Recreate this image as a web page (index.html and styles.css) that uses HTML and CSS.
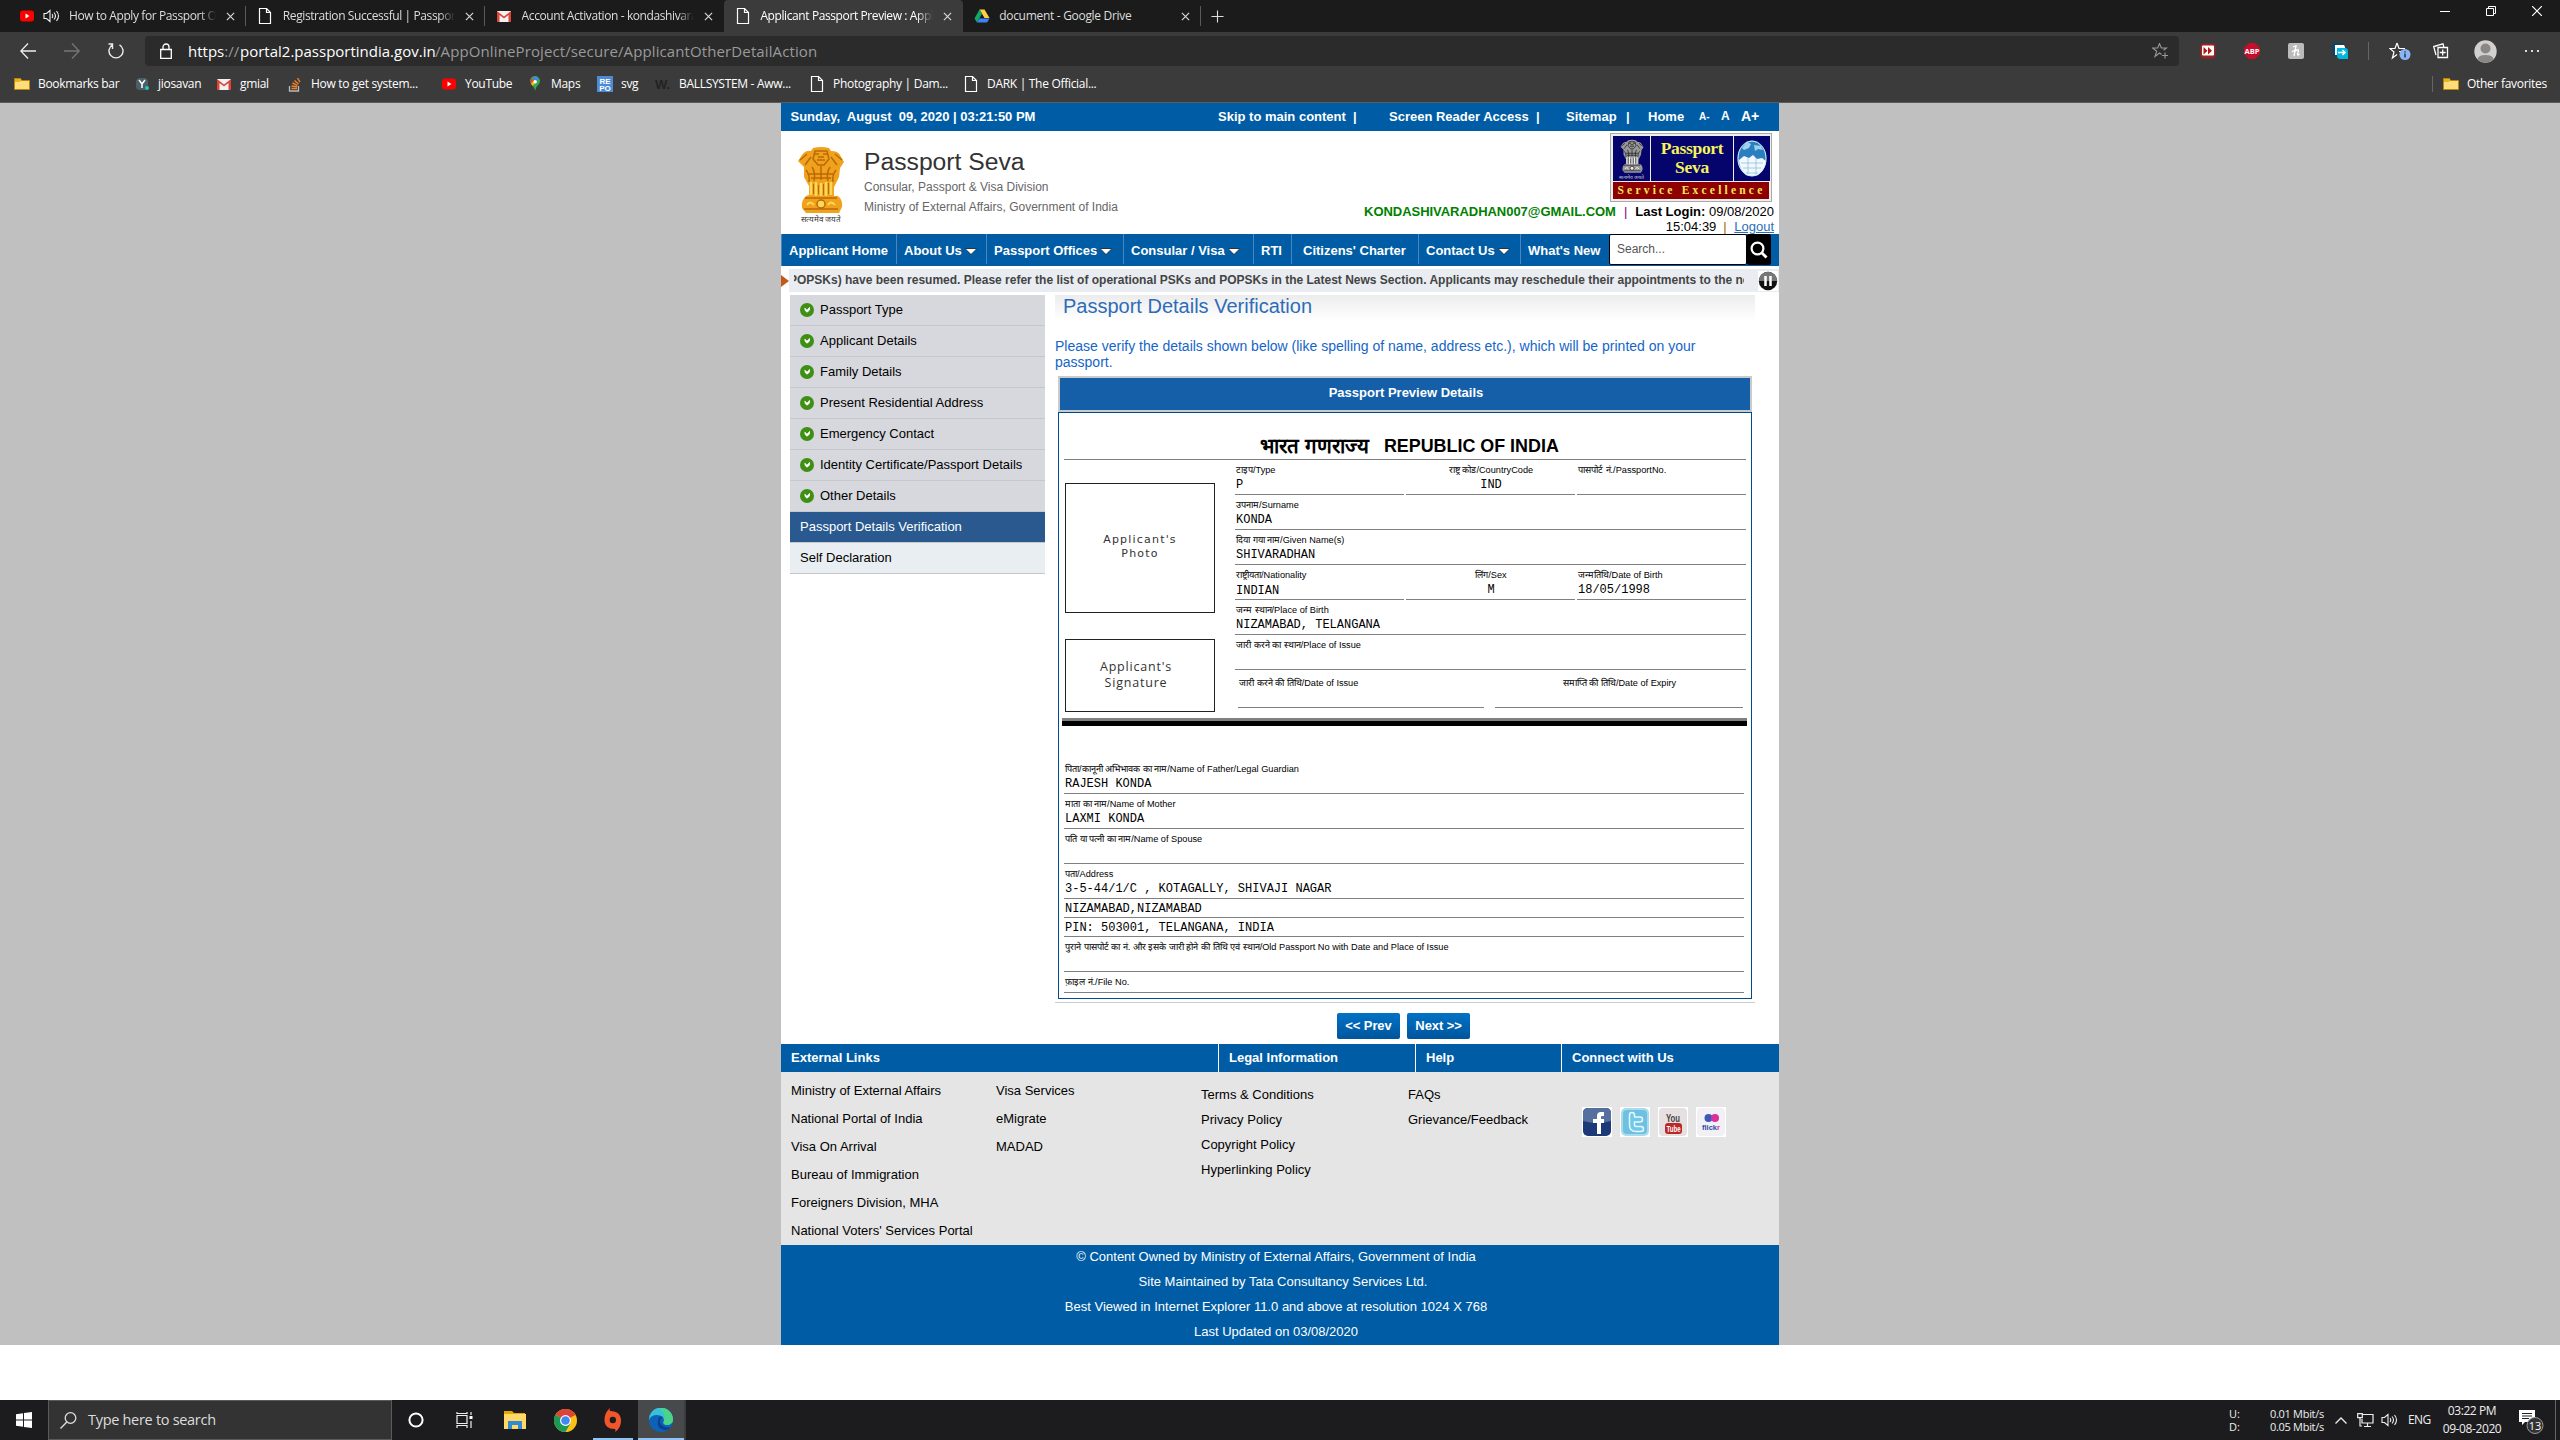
FILE: index.html
```html
<!DOCTYPE html>
<html lang="en">
<head>
<meta charset="utf-8">
<title>Applicant Passport Preview</title>
<link rel="stylesheet" href="styles.css">
</head>
<body>
<svg class="defs" width="0" height="0" aria-hidden="true">
  <defs>
    <symbol id="doc" viewBox="0 0 16 16"><path d="M2.5.5h7l4 4v11h-11zM9.5.5v4h4" fill="none" stroke="#fff" stroke-width="1.2"/></symbol>
    <symbol id="x" viewBox="0 0 10 10"><path d="M1 1l8 8M9 1L1 9" stroke="#d8d8d8" stroke-width="1.3" fill="none"/></symbol>
    <symbol id="yt" viewBox="0 0 16 16"><rect x="1" y="2.500" width="14" height="11" rx="3" fill="#f00"/><path d="M6.500 5.500v5l4-2.500z" fill="#fff"/></symbol>
    <symbol id="gmail" viewBox="0 0 16 16"><path d="M1 3h14v11H1z" fill="#f2f2f2"/><path d="M1 14V3l7 5.500L15 3v11h-2.500V7L8 10.500 3.500 7v7z" fill="#db4437"/></symbol>
    <symbol id="folder" viewBox="0 0 16 16"><path d="M.5 2.500h6l1 2h8v9H.5z" fill="#ffdc7c" stroke="#b8860b"/><path d="M1 3h5l1 1.500L6 6H1z" fill="#e6b422"/></symbol>
    <symbol id="vol" viewBox="0 0 17 16"><path d="M1 5.500h2.500L7 2.500v11L3.500 10.500H1zM9 6q1.500 2 0 4M11 4.500q3 3.500 0 7M13.500 3q4 5 0 10" fill="none" stroke="#eee" stroke-width="1.100"/></symbol>
    <symbol id="tick" viewBox="0 0 14 14"><circle cx="7" cy="7" r="7" fill="#3f8f14"/><path d="M4.800 5.200l2.200 2 2.600-2.800-.2 2.800L7 9.200 5.200 7.500z" fill="#fff" stroke="#fff" stroke-width=".8"/></symbol>
    <symbol id="emblem" viewBox="0 0 48 67">
      <path d="M16 1q8-2 16 0l2 3q7 0 9 4l4 7-4 6-1 9-5 10v9h4q5 4 4 11l-3 6H9l-4-5q-1-8 4-12l3-1v-9L7 30V20l-6-6 4-6q4-5 9-4z" fill="var(--a)"/>
      <path d="M18 4h12l2 8-5 6h-6l-5-6zM3 13l7-6M8 18l6-8M45 13l-7-6M40 18l-6-8M9 23q4 5 3 12M15 20q4 6 2 14M24 19v14M33 20q-4 6-2 14M39 23q-4 5-3 12M12 27h24M14 31h20" fill="none" stroke="var(--b)" stroke-width="1.500"/>
      <path d="M18 7h4M26 7h4M20 13h8M21 10h6" stroke="var(--b)" stroke-width="1.600"/>
      <path d="M14 35v13M19 35v14M24 36v13M29 35v14M34 35v13" stroke="var(--c)" stroke-width="2.400"/>
      <path d="M16.500 37v10M26.500 37v11M31.500 36v11M21.500 38v9" stroke="var(--b)" stroke-width="1"/>
      <path d="M8 51h32M7 62h34" stroke="var(--b)" stroke-width="1.300"/>
      <circle cx="24" cy="57" r="4" fill="var(--c)" stroke="var(--b)" stroke-width="1.500"/>
      <path d="M10 58q3-5 7 0M31 58q3-5 7 0" fill="none" stroke="var(--c)" stroke-width="2"/>
    </symbol>
  </defs>
</svg>

<header class="browser">
  <div class="tabs">
    <div class="tab"><svg class="i16"><use href="#yt"/></svg><svg class="sound"><use href="#vol"/></svg><span class="name fade">How to Apply for Passport Online</span><svg class="close"><use href="#x"/></svg></div>
    <div class="tab"><svg class="i16"><use href="#doc"/></svg><span class="name fade">Registration Successful | Passport</span><svg class="close"><use href="#x"/></svg></div>
    <div class="tab plain"><svg class="i16"><use href="#gmail"/></svg><span class="name fade">Account Activation - kondashivara</span><svg class="close"><use href="#x"/></svg></div>
    <div class="tab active"><svg class="i16"><use href="#doc"/></svg><span class="name fade">Applicant Passport Preview : Appl</span><svg class="close"><use href="#x"/></svg></div>
    <div class="tab"><svg class="i16" viewBox="0 0 16 16"><path d="M5.500 1.500h5l5 8.500h-5z" fill="#ffcf40"/><path d="M5.500 1.500L.5 10.500 3 14.500l5-8.700z" fill="#11a861"/><path d="M5.500 10.500h10l-2.500 4H3z" fill="#3d82f6"/></svg><span class="name">document - Google Drive</span><svg class="close"><use href="#x"/></svg></div>
    <svg class="plus" viewBox="0 0 14 14"><path d="M7 .5v13M.5 7h13" stroke="#ddd" stroke-width="1.200"/></svg>
    <div class="window-buttons">
      <svg width="10" height="10"><path d="M0 5.500h10" stroke="#fff"/></svg>
      <svg width="10" height="10"><path d="M.5 2.500h7v7h-7zM2.500 2.500v-2h7v7h-2" fill="none" stroke="#fff"/></svg>
      <svg width="10" height="10"><path d="M0 0l10 10M10 0L0 10" stroke="#fff" stroke-width="1.200"/></svg>
    </div>
  </div>
  <div class="toolbar">
    <div class="nav-buttons">
      <svg width="16" height="16"><path d="M16 8H1M8 .5L.8 8 8 15.500" fill="none" stroke="#eee" stroke-width="1.300"/></svg>
      <svg width="16" height="16"><path d="M0 8h15M8 .5L15.200 8 8 15.500" fill="none" stroke="#777" stroke-width="1.300"/></svg>
      <svg width="16" height="18"><path d="M4.500 2.800a7 7 0 1 0 7 0M4.500 7V2H.5" fill="none" stroke="#eee" stroke-width="1.400"/></svg>
    </div>
    <div class="omnibox">
      <svg width="12" height="16"><path d="M.7 6.500h10.600v8.800H.7zM3 6.500V4a3 3 0 0 1 6 0v2.500" fill="none" stroke="#fff" stroke-width="1.300"/></svg>
      <span class="url"><b class="proto">https<i>://</i></b><b class="host">portal2.passportindia.gov.in</b><i class="path">/AppOnlineProject/secure/ApplicantOtherDetailAction</i></span>
      <svg class="fav" width="16" height="16" viewBox="0 0 16 16"><path d="M9.500 11.500L7.500 10l-4.500 3.500 1.700-5.300L.5 5h5.200L7.500.5 9.300 5h5.200l-3 2.300M13 9.500v6M10 12.500h6" fill="none" stroke="#999" stroke-width="1.100"/></svg>
    </div>
    <div class="extensions">
      <svg width="16" height="16"><rect width="15" height="15" x=".5" y=".5" rx="4" fill="#a32020"/><rect x="2" y="2.500" width="12" height="10" rx="1" fill="#fff"/><path d="M3.500 4v7.500l4-3.700zM8 4v7.500l4-3.700z" fill="#b01818"/></svg>
      <svg width="16" height="16"><path d="M5 0h6l5 5v6l-5 5H5l-5-5V5z" fill="#c70d2c"/><text x="8" y="10.600" class="abp" text-anchor="middle">ABP</text></svg>
      <svg width="16" height="16"><rect width="16" height="16" rx="2" fill="#bbb"/><path d="M5 4q4-2 3-1L6 13M6.500 9q4-4 4-1l-1 3q0 2 2 0M4 9l3-2" fill="none" stroke="#fff" stroke-width="1.300"/></svg>
      <svg width="16" height="16"><path d="M0 0h10l2 4H5v9H1z" fill="#05466f"/><path d="M3 2h9l1 2v8H3z" fill="#fff"/><path d="M5 5h8q3 0 3 3v8H8q-3 0-3-3z" fill="#00b7e0"/><path d="M6 9.500h7M10.500 7l2.500 2.500-2.500 2.500" stroke="#fff" stroke-width="1.600" fill="none"/></svg>
    </div>
    <div class="actions">
      <svg width="22" height="18"><path d="M8 1l2 5.500h6M8 1L6 6.500H.8L5 10l-1.600 6L8 12.500M10 9.500h6" fill="none" stroke="#fff" stroke-width="1.200"/><circle cx="16" cy="12.500" r="5.500" fill="#8ab4f8"/><path d="M16 11.500v4M16 9.300v1.300" stroke="#222" stroke-width="1.300"/></svg>
      <svg class="collections" width="16" height="16"><path d="M5 4.500h9.500v10H5zM9.700 6.500v6M6.700 9.500h6M3 12L.7 3.500 10 .8l.8 3M5 2.300l-3 1" fill="none" stroke="#fff" stroke-width="1.300"/></svg>
      <svg class="avatar" width="23" height="23"><circle cx="11.500" cy="11.500" r="11.200" fill="#d2d0ce"/><circle cx="11.500" cy="8.500" r="5" fill="#8a8886"/><path d="M3.500 19q1-4 8-4t8 4q-3 3.700-8 3.700T3.500 19" fill="#8a8886"/></svg>
      <svg width="14" height="4"><path d="M0 1h2v2H0zM6 1h2v2H6zM12 1h2v2h-2z" fill="#ddd"/></svg>
    </div>
  </div>
  <div class="bookmarks">
    <span><svg class="i16"><use href="#folder"/></svg><b>Bookmarks bar</b></span>
    <span><svg class="i16"><rect x="2" y="2" width="12" height="12" rx="4" fill="#4a5f68"/><path d="M5 4l3 4 3-4M8 8v4" stroke="#fff" stroke-width="1.500" fill="none"/><circle cx="13" cy="12" r="2" fill="#2bc5b4"/></svg><b>jiosavan</b></span>
    <span><svg class="i16"><use href="#gmail"/></svg><b>gmial</b></span>
    <span><svg class="i16"><path d="M2.500 10v5h9v-5" fill="none" stroke="#bcbbbb" stroke-width="1.300"/><path d="M4.500 12.500h5.500M4.500 10l5.600.8M5.500 7l5 2.300M7.500 4.500l4 3.500M10.500 2l2.500 4.200" stroke="#f48024" stroke-width="1.400"/></svg><b>How to get system...</b></span>
    <span><svg class="i16"><use href="#yt"/></svg><b>YouTube</b></span>
    <span><svg class="i16"><path d="M8 15q0-3-3.500-6.500A5 5 0 1 1 12 8Q8.500 11 8 15" fill="#34a853"/><path d="M4 7.500A5 5 0 0 1 5 2l3 3z" fill="#ea4335"/><path d="M5 2a5 5 0 0 1 7 1L8 5z" fill="#4285f4"/><path d="M4 7.500l3-3 2 2-3.500 3.500z" fill="#fbbc04"/><circle cx="8.200" cy="5.800" r="1.700" fill="#fff"/></svg><b>Maps</b></span>
    <span><svg class="i16"><rect width="16" height="16" fill="#4d8bd6"/><text class="repo" x="8" y="7.500" text-anchor="middle">RE</text><text class="repo" x="8" y="15" text-anchor="middle">PO</text></svg><b>svg</b></span>
    <span><svg class="i16"><text class="w" x="0" y="13">W.</text></svg><b>BALLSYSTEM - Aww...</b></span>
    <span><svg class="i16"><use href="#doc"/></svg><b>Photography | Dam...</b></span>
    <span><svg class="i16"><use href="#doc"/></svg><b>DARK | The Official...</b></span>
    <span class="other"><svg class="i16"><use href="#folder"/></svg><b>Other favorites</b></span>
  </div>
</header>

<main class="backdrop">
<div class="page">
  <div class="top-bar">
    <span class="date">Sunday,&nbsp; August&nbsp; 09, 2020 | 03:21:50 PM</span>
    <span>Skip to main content&nbsp; |</span><span>Screen Reader Access&nbsp; |</span><span>Sitemap</span><span>|</span><span>Home</span><span class="a-small">A-</span><span class="a-mid">A</span><span class="a-big">A+</span>
  </div>
  <div class="masthead">
    <div class="brand">
      <div class="emblem"><svg width="48" height="69"><use href="#emblem"/></svg><small>सत्यमेव जयते</small></div>
      <div><h1>Passport Seva</h1><p>Consular, Passport &amp; Visa Division</p><p>Ministry of External Affairs, Government of India</p></div>
    </div>
    <div class="account">
      <div class="badge">
        <div class="badge-top">
          <div class="mini"><svg width="24" height="35"><use href="#emblem"/></svg><small>सत्यमेव जयते</small></div>
          <div class="seva">Passport<br>Seva</div>
          <div class="globe"><svg width="30" height="37" viewBox="0 0 30 37"><ellipse cx="15" cy="18.500" rx="14.500" ry="18" fill="#2a7fc0"/><path d="M7 16l5 2 4-3 4 4 5-1 4 3q-1 9-8 14-6 2-12 0Q2 29 2 20z" fill="#f2f8fc"/><path d="M10 2l4 2-2 4-5 2-2-2zM17 5l7 1 2 4-5-1-3 2z" fill="#9fd0ee"/><path d="M4 23h22M6 28h18M9 33h12M11 18v16M19 18v17" stroke="#8fc0e4" stroke-width=".8"/><ellipse cx="15" cy="18.500" rx="14" ry="17.500" fill="none" stroke="#dceefa"/></svg></div>
        </div>
        <div class="excellence">Service Excellence</div>
      </div>
      <div class="login"><b class="mail">KONDASHIVARADHAN007@GMAIL.COM</b><i>|</i><b>Last Login:</b> 09/08/2020</div>
      <div class="login second">15:04:39<i class="brown">|</i><u>Logout</u></div>
    </div>
  </div>
  <nav class="menu">
    <a>Applicant Home</a><a>About Us<svg class="caret"><path d="M0 0h12L6 7z" fill="#333"/><path d="M1 1h10L6 6z" fill="#fff"/></svg></a><a>Passport Offices<svg class="caret"><path d="M0 0h12L6 7z" fill="#333"/><path d="M1 1h10L6 6z" fill="#fff"/></svg></a><a>Consular / Visa<svg class="caret"><path d="M0 0h12L6 7z" fill="#333"/><path d="M1 1h10L6 6z" fill="#fff"/></svg></a><a>RTI</a><a class="charter">Citizens' Charter</a><a>Contact Us<svg class="caret"><path d="M0 0h12L6 7z" fill="#333"/><path d="M1 1h10L6 6z" fill="#fff"/></svg></a><a class="last">What's New</a>
    <div class="search"><span>Search...</span></div>
    <div class="go"><svg width="18" height="18"><circle cx="7.500" cy="7.500" r="5.900" fill="none" stroke="#fff" stroke-width="2.200"/><path d="M11.500 11.500l5 5" stroke="#fff" stroke-width="2.800"/></svg></div>
  </nav>
  <div class="ticker">
    <svg width="8" height="12"><path d="M0 0l8 6-8 6z" fill="#c05a1c"/></svg>
    <div class="strip"><div class="news"><span>POPSKs) have been resumed. Please refer the list of operational PSKs and POPSKs in the Latest News Section. Applicants may reschedule their appointments to the nearest</span></div>
    <svg class="pause" width="20" height="20"><rect width="20" height="20" fill="#fff"/><circle cx="10" cy="10" r="9.200" fill="#111"/><path d="M.8 10a9.200 9.200 0 0 1 18.400 0z" fill="#777"/><path d="M7.500 5v10M12.500 5v10" stroke="#fff" stroke-width="2.500"/></svg></div>
  </div>

  <div class="content">
    <ul class="steps">
      <li><svg class="tick"><use href="#tick"/></svg>Passport Type</li>
      <li><svg class="tick"><use href="#tick"/></svg>Applicant Details</li>
      <li><svg class="tick"><use href="#tick"/></svg>Family Details</li>
      <li><svg class="tick"><use href="#tick"/></svg>Present Residential Address</li>
      <li><svg class="tick"><use href="#tick"/></svg>Emergency Contact</li>
      <li><svg class="tick"><use href="#tick"/></svg>Identity Certificate/Passport Details</li>
      <li><svg class="tick"><use href="#tick"/></svg>Other Details</li>
      <li class="current">Passport Details Verification</li>
      <li class="next">Self Declaration</li>
    </ul>
    <section class="verify">
      <h2>Passport Details Verification</h2>
      <p class="hint">Please verify the details shown below (like spelling of name, address etc.), which will be printed on your passport.</p>
      <div class="preview-head">Passport Preview Details</div>
      <div class="preview">
        <h3><span>भारत गणराज्य</span> REPUBLIC OF INDIA</h3>
        <div class="identity">
          <div class="pictures"><div class="photo">Applicant's<br>Photo</div><div class="signature">Applicant's<br>Signature</div></div>
          <div class="fields">
            <div class="trio">
              <div class="field"><label>टाइप/Type</label><span>P</span></div>
              <div class="field mid"><label>राष्ट्र कोड/CountryCode</label><span>IND</span></div>
              <div class="field"><label>पासपोर्ट नं./PassportNo.</label></div>
            </div>
            <div class="field"><label>उपनाम/Surname</label><span>KONDA</span></div>
            <div class="field"><label>दिया गया नाम/Given Name(s)</label><span>SHIVARADHAN</span></div>
            <div class="trio">
              <div class="field"><label>राष्ट्रीयता/Nationality</label><span class="low">INDIAN</span></div>
              <div class="field mid"><label>लिंग/Sex</label><span>M</span></div>
              <div class="field"><label>जन्मतिथि/Date of Birth</label><span>18/05/1998</span></div>
            </div>
            <div class="field"><label>जन्म स्थान/Place of Birth</label><span>NIZAMABAD, TELANGANA</span></div>
            <div class="field"><label>जारी करने का स्थान/Place of Issue</label></div>
            <div class="dates">
              <div class="field"><label>जारी करने की तिथि/Date of Issue</label></div>
              <div class="field mid"><label>समाप्ति की तिथि/Date of Expiry</label></div>
            </div>
          </div>
        </div>
        <div class="divider"></div>
        <div class="back-page">
          <div class="field"><label>पिता/कानूनी अभिभावक का नाम/Name of Father/Legal Guardian</label><span>RAJESH KONDA</span></div>
          <div class="field"><label>माता का नाम/Name of Mother</label><span>LAXMI KONDA</span></div>
          <div class="field"><label>पति या पत्नी का नाम/Name of Spouse</label></div>
          <div class="field"><label>पता/Address</label><span>3-5-44/1/C , KOTAGALLY, SHIVAJI NAGAR</span></div>
          <div class="field line"><span>NIZAMABAD,NIZAMABAD</span></div>
          <div class="field line"><span>PIN: 503001, TELANGANA, INDIA</span></div>
          <div class="field"><label>पुराने पासपोर्ट का नं. और इसके जारी होने की तिथि एवं स्थान/Old Passport No with Date and Place of Issue</label></div>
          <div class="field file"><label>फ़ाइल नं./File No.</label></div>
        </div>
      </div>
      <div class="buttons"><button>&lt;&lt; Prev</button><button>Next &gt;&gt;</button></div>
    </section>
  </div>

  <div class="foot-head"><span>External Links</span><span>Legal Information</span><span>Help</span><span>Connect with Us</span></div>
  <div class="foot">
    <ul class="ext"><li>Ministry of External Affairs</li><li>National Portal of India</li><li>Visa On Arrival</li><li>Bureau of Immigration</li><li>Foreigners Division, MHA</li><li>National Voters' Services Portal</li></ul>
    <ul class="ext"><li>Visa Services</li><li>eMigrate</li><li>MADAD</li></ul>
    <ul class="legal"><li>Terms &amp; Conditions</li><li>Privacy Policy</li><li>Copyright Policy</li><li>Hyperlinking Policy</li></ul>
    <ul class="legal"><li>FAQs</li><li>Grievance/Feedback</li></ul>
    <div class="social">
      <svg width="30" height="30"><rect width="30" height="30" fill="#fff"/><rect x="1" y="1" width="28" height="28" rx="5" fill="#1d3a78"/><path d="M1 14V6q0-5 5-5h18q5 0 5 5v8q-14 4-28 0" fill="#55709f"/><path d="M15 27V16h-4v-4h4V9q0-4 4-4h3v4h-2q-1 0-1 1v2h3v4h-3v11z" fill="#fff"/></svg>
      <svg width="30" height="30"><rect width="30" height="30" fill="#fff"/><rect x="1" y="1" width="28" height="28" rx="5" fill="#a9dbec"/><rect x="3" y="3" width="24" height="24" rx="4" fill="#6fc1e2"/><path d="M12 8v10q0 4 4 4h5M12 12.500h8" fill="none" stroke="#e8f7fc" stroke-width="6.500" stroke-linecap="round"/><path d="M12 8v10q0 4 4 4h5M12 12.500h8" fill="none" stroke="#6fc9e8" stroke-width="3.500" stroke-linecap="round"/></svg>
      <svg width="30" height="30"><rect width="30" height="30" fill="#fff"/><rect x="1" y="1" width="28" height="28" rx="4" fill="#e6e0e0"/><text class="you" x="15" y="14.500" text-anchor="middle" textLength="14" lengthAdjust="spacingAndGlyphs">You</text><rect x="7" y="16" width="17" height="11" rx="3" fill="#bb2626"/><text class="tube" x="15.500" y="25" text-anchor="middle" textLength="14" lengthAdjust="spacingAndGlyphs">Tube</text></svg>
      <svg width="30" height="30"><rect width="30" height="30" fill="#fff"/><rect x="1" y="1" width="28" height="28" rx="4" fill="#f2f0f4"/><circle cx="12.500" cy="11" r="4" fill="#3a59b8"/><circle cx="19" cy="11" r="4" fill="#d8319a"/><text class="flickr" x="15" y="22.500" text-anchor="middle" textLength="18" lengthAdjust="spacingAndGlyphs">flick<tspan fill="#d8319a">r</tspan></text></svg>
    </div>
  </div>
  <div class="copyright"><p>© Content Owned by Ministry of External Affairs, Government of India</p><p class="site">Site Maintained by Tata Consultancy Services Ltd.</p><p>Best Viewed in Internet Explorer 11.0 and above at resolution 1024 X 768</p><p>Last Updated on 03/08/2020</p></div>
</div>
</main>

<footer class="taskbar">
  <div class="start"><svg width="16" height="16"><path d="M0 2.300l7-1v6.200H0zM8 1.100L16 0v7.500H8zM0 8.500h7v6.200l-7-1zM8 8.500h8V16l-8-1.100z" fill="#fff"/></svg></div>
  <div class="find"><svg width="17" height="17"><circle cx="10.500" cy="6" r="5.300" fill="none" stroke="#ddd" stroke-width="1.300"/><path d="M6.800 10L.5 16.500" stroke="#ddd" stroke-width="1.400"/></svg><span>Type here to search</span></div>
  <div class="apps">
    <div><svg width="16" height="16"><circle cx="8" cy="8" r="6.600" fill="none" stroke="#fff" stroke-width="2"/></svg></div>
    <div><svg width="17" height="16"><path d="M1 3.500h10v8H1zM1 0v1.500h10V0M1 16v-2.500h10V16M15 0v3M15 9v7" fill="none" stroke="#eee" stroke-width="1.200"/><path d="M13.500 4h3v3h-3z" fill="#fff"/></svg></div>
    <div><svg width="22" height="20"><path d="M0 1h8l2 2h11v15H0z" fill="#e0a800"/><path d="M0 4h22v15H0z" fill="#ffd867"/><path d="M4 19v-8h14v8h-4v-4H8v4z" fill="#2e8bd6"/></svg></div>
    <div><svg width="23" height="23" viewBox="0 0 24 24"><circle cx="12" cy="12" r="12" fill="#fbc116"/><path d="M12 12L1.600 6A12 12 0 0 1 22.400 6z" fill="#dc4437"/><path d="M12 12L1.600 6A12 12 0 0 0 12 24l5-9z" fill="#1a9a55"/><path d="M12 6.500h10.600L22 5.500 12 5z" fill="#dc4437"/><circle cx="12" cy="12" r="5.700" fill="#fff"/><circle cx="12" cy="12" r="4.500" fill="#4486f4"/></svg></div>
    <div class="open"><svg width="20" height="24"><path d="M7 0q-1 2 0 3 11 0 11 10 0 7-6 11 1-2 0-3Q1 21 1.500 11 2 4 7 0" fill="#f0562a"/><circle cx="9.800" cy="12" r="3.200" fill="#1c1c1e"/></svg></div>
    <div class="running"><svg width="24" height="24"><circle cx="12" cy="12" r="12" fill="#0b62b8"/><path d="M0 12A12 12 0 0 1 24 11q0 6-7 6-4-1-2-4 0-6-7-6-6 0-8 5" fill="#37c0d8"/><path d="M10 .2A12 12 0 0 1 24 11q0 6-7 6-4-1-2-4 2-8-5-12.800" fill="#4bd38a"/><path d="M9 12q-2 9 7 10 4 0 6-3-3 1-6 0-5-2-5-6 0-3 3-4-4-1-5 3" fill="#0e3f8c"/></svg></div>
  </div>
  <div class="tray">
    <div class="net"><span>U:</span><em>0.01 Mbit/s</em><span>D:</span><em>0.05 Mbit/s</em></div>
    <svg class="up" width="12" height="7"><path d="M.5 6.500L6 1l5.500 5.500" fill="none" stroke="#eee" stroke-width="1.300"/></svg>
    <svg class="screen" width="17" height="15"><path d="M5 1.500h11v8.500H5V6M10.500 10v3.500M7 13.500h7M.7.700h4.600v4H.7zM3 4.700V13h2" fill="none" stroke="#eee" stroke-width="1.200"/></svg>
    <svg class="volume" width="17" height="16"><use href="#vol"/></svg>
    <span class="lang">ENG</span>
    <div class="clock">03:22 PM<br>09-08-2020</div>
    <svg class="notes" width="26" height="26"><path d="M0 1h16v12H6l-3 3v-3H0z" fill="#fff"/><path d="M3 4.500h10M3 7h10M3 9.500h7" stroke="#222" stroke-width="1.200"/><circle cx="16" cy="16.500" r="8" fill="#333" stroke="#999"/><text x="16" y="20.500" class="count" text-anchor="middle">13</text></svg>
  </div>
</footer>
</body>
</html>
```
FILE: styles.css
```css
* { box-sizing: border-box; }
body { margin: 0; width: 2560px; height: 1440px; overflow: hidden; display: flex; flex-direction: column; background: #fff; font: 13px/16px "Liberation Sans", Arial, sans-serif; color: #000; }
svg { display: block; flex: none; }
.defs { position: absolute; }
ul, p, h1, h2, h3 { margin: 0; padding: 0; list-style: none; font-weight: normal; }
.i16 { width: 16px; height: 16px; }

/* Browser frame */
.browser { height: 103px; flex: none; background: #3b3b3b; border-bottom: 1px solid #5c5c5c; font-family: "Open Sans", "Noto Sans", sans-serif; color: #fff; }
.tabs { height: 32px; background: #1b1b1b; display: flex; align-items: center; padding-left: 7.500px; font-size: 12px; }
.tab { width: 238.800px; height: 32px; flex: none; padding: 0 11px; display: flex; align-items: center; position: relative; color: #ddd; }
.tab::after { content: ""; width: 1px; height: 20px; background: #5a5a5a; position: absolute; right: 0; top: 6px; }
.tab.plain::after, .tab.active::after { display: none; }
.tab.active { background: #3b3b3b; color: #fff; border-radius: 4px 4px 0 0; }
.tab .sound { width: 17px; height: 16px; margin-left: 8px; }
.tab .name { flex: 1; margin: 0 10px 0 9.500px; white-space: nowrap; overflow: hidden; letter-spacing: -.3px; }
.fade { -webkit-mask-image: linear-gradient(90deg, #000 calc(100% - 16px), transparent); mask-image: linear-gradient(90deg, #000 calc(100% - 16px), transparent); }
.tab .fade { letter-spacing: -.4px; }
.close { width: 9px; height: 9px; }
.plus { width: 13px; height: 13px; margin-left: 10px; }
.window-buttons { margin-left: auto; padding: 0 18px 10px 0; display: flex; gap: 36px; }
.toolbar { height: 38px; display: flex; align-items: center; }
.nav-buttons { width: 145px; padding-left: 20px; display: flex; align-items: center; gap: 28px; }
.omnibox { width: 2034px; height: 30px; background: #2b2b2b; border-radius: 4px; display: flex; align-items: center; padding: 0 11px 0 15px; }
.url { flex: 1; margin-left: 16px; font-size: 15px; white-space: nowrap; display: flex; }
.url b, .url i { font-weight: normal; font-style: normal; }
.url i { color: #9a9a9a; }
.proto { letter-spacing: 0; width: 52px; }
.host { letter-spacing: 0; width: 195px; }
.path { letter-spacing: .11px; }
.extensions { margin-left: 20.500px; width: 168px; display: flex; gap: 28px; }
.abp { font: bold 7.500px "Open Sans", sans-serif; fill: #fff; }
.actions { height: 18px; border-left: 1px solid #666; padding-left: 20px; display: flex; align-items: center; }
.collections { margin-left: 22px; }
.avatar { margin: 0 28px 0 25px; }
.bookmarks { height: 28px; padding-left: 14px; display: grid; grid-template-columns: 120px 82px 71px 154px 86px 70px 58px 154px 154px 1469px 128px; align-items: center; font-size: 12px; }
.bookmarks span { display: flex; align-items: center; gap: 8px; }
.bookmarks b { font-weight: normal; white-space: nowrap; letter-spacing: -.3px; }
.bookmarks .other { height: 16px; border-left: 1px solid #666; padding-left: 10px; }
.repo { font: bold 8px "Liberation Sans", sans-serif; fill: #fff; }
.w { font: bold 13px "Liberation Sans", sans-serif; fill: #222; }

/* Site */
.backdrop { height: 1242px; flex: none; background: #c0c0c0; display: flex; justify-content: center; }
.page { width: 998px; background: #fff; display: flex; flex-direction: column; }
.top-bar { height: 28px; flex: none; background: #005da5; color: #fff; font-weight: bold; line-height: 27px; padding-left: 9.500px; display: grid; grid-template-columns: 427.500px 171px 177px 60px 22px 51px 22px 20px 30px; white-space: nowrap; }
.a-small { font-size: 10px; }
.a-mid { font-size: 12px; }
.a-big { font-size: 14px; }
.masthead { height: 103px; flex: none; display: flex; justify-content: space-between; }
.brand { display: flex; padding: 15px 0 0 16px; }
.emblem { width: 67px; --a: #f0a21c; --b: #b96a08; --c: #ffd85a; }
.emblem small { display: block; width: 48px; text-align: center; font-size: 8px; line-height: 10px; color: #333; white-space: nowrap; }
h1 { font-size: 24.700px; line-height: 30px; color: #333; padding-top: 1px; }
.brand p { font-size: 12px; line-height: 20px; color: #666; letter-spacing: 0; }
.account { width: 440px; display: flex; flex-direction: column; align-items: flex-end; padding-right: 5px; }
.badge { width: 162px; height: 69px; margin: 2px 2px 2px 0; border: 1px solid #aaa; padding: 2px; background: #eee; }
.badge-top { height: 45px; display: grid; grid-template-columns: 37px 82px 36px; gap: 1px; }
.badge-top > div { background: #04046c; display: flex; flex-direction: column; align-items: center; padding-top: 3px; }
.mini { --a: #999; --b: #222; --c: #eee; }
.mini small { font-size: 5px; line-height: 6px; color: #ccc; white-space: nowrap; }
.badge-top .seva { font: bold 17.500px/19px "Liberation Serif", "Times New Roman", serif; letter-spacing: -.3px; color: #f7f35a; text-align: center; }
.badge .globe { padding-top: 4px; }
.excellence { margin-top: 1px; height: 17px; background: #8e0000; color: #f7e85a; font: bold 11.500px/17px "Liberation Serif", serif; letter-spacing: 3.200px; text-align: center; white-space: nowrap; padding-left: 1px; }
.login { line-height: 16px; white-space: nowrap; }
.login i { font-style: normal; color: #808; margin: 0 8px; }
.login.second { margin-top: -1px; }
.login .brown { color: #a60; margin: 0 7.500px 0 7px; }
.mail { color: #008000; letter-spacing: -.04px; }
.login u { color: #2a6ebb; }
.menu { height: 32px; flex: none; background: #005da5; display: flex; color: #fff; font-weight: bold; line-height: 31px; white-space: nowrap; border-left: 1px solid #4a86bd; }
.menu a { border-right: 1px solid #4a86bd; height: 30px; padding: 2px 0 0 7px; display: flex; align-items: center; gap: 3px; }
.menu a:nth-child(1) { width: 115px; }
.menu a:nth-child(2) { width: 90px; }
.menu a:nth-child(3) { width: 137px; }
.menu a:nth-child(4) { width: 130px; }
.menu a:nth-child(5) { width: 38px; }
.menu a.charter { width: 127px; padding-left: 11px; }
.menu a:nth-child(7) { width: 102px; }
.menu a.last { width: 88px; border: 0; }
.caret { width: 12px; height: 7px; margin-top: 3px; }
.search { width: 138px; height: 31px; border: 1px solid #000; border-radius: 2px; background: #fff; color: #555; font-weight: normal; line-height: 28px; padding-left: 7px; font-size: 12px; }
.go { width: 24px; height: 31px; background: #000; border-radius: 2px; display: flex; align-items: center; justify-content: center; }
.ticker { height: 23px; flex: none; margin: 3px 0; display: flex; align-items: center; }
.strip { flex: 1; height: 23px; background: #e9edf2; display: flex; align-items: center; justify-content: space-between; padding: 0 1px 0 5px; }
.news { width: 950px; overflow: hidden; white-space: nowrap; font-weight: bold; font-size: 12px; line-height: 15px; padding-bottom: 1px; color: #444; }
.news span { margin-left: -5px; }

/* Body */
.content { height: 749px; flex: none; display: flex; padding-left: 9px; }
.steps { width: 255px; }
.steps li { height: 31px; background: #d7d8dd; border-bottom: 1px solid #c6c7cb; display: flex; align-items: center; gap: 6px; padding: 0 0 1px 10px; line-height: 16px; }
.tick { width: 14px; height: 14px; margin-top: 1px; }
.steps .current { background: #29598f; color: #fff; }
.steps .next { background: #e8eef2; }
.verify { width: 700px; margin-left: 10px; }
h2 { height: 25px; line-height: 23px; font-size: 20px; padding-left: 8px; color: #2d6cb8; background: linear-gradient(#ececec, #fff); }
.hint { height: 56px; padding-top: 18px; font-size: 14px; color: #1565c8; }
.preview-head { margin: 0 3px; height: 36px; background: #155fa8; border: 2px solid #c9cacc; color: #fff; font-weight: bold; text-align: center; line-height: 29px; padding-left: 2px; }
.preview { margin: 0 3px; height: 587px; border: 1px solid #004b8d; padding: 0 5px; }
h3 { height: 47px; border-bottom: 1px solid #808080; font-weight: bold; font-size: 17.900px; line-height: 22px; padding: 22px 0 0 9px; display: flex; justify-content: center; gap: 15px; white-space: nowrap; }
h3 span { font-size: 20.500px; }
.identity { height: 258px; display: flex; padding-left: 1px; }
.pictures { width: 170px; padding-top: 23px; font: 11px/14px "DejaVu Sans", sans-serif; color: #333; text-align: center; }
.photo, .signature { width: 150px; border: 1px solid #222; }
.photo { height: 130px; padding-top: 49px; letter-spacing: 1.200px; }
.signature { height: 73px; margin-top: 26px; padding: 19px 8px 0 0; line-height: 16px; font-family: "Open Sans", sans-serif; font-size: 12.500px; letter-spacing: .8px; }
.fields { flex: 1; }
.trio { display: grid; grid-template-columns: 1fr 1fr 1fr; gap: 2px; }
.field { height: 35px; border-bottom: 1px solid #808080; padding: 3px 0 0 1px; white-space: nowrap; }
.field label, .field span { display: block; }
.field label { font-size: 9.200px; line-height: 14px; height: 14px; }
.field span { font: 12px/15px "Liberation Mono", "Courier New", monospace; padding-top: 1px; height: 16px; }
.field .low { padding-top: 2px; }
.mid { text-align: center; }
.dates { display: grid; grid-template-columns: 246px 248px; gap: 11px; padding-left: 3px; }
.dates .field { height: 38px; padding-top: 6px; }
.divider { height: 8px; margin: 0 -1px 33px -2px; background: #000; border-top: 3px solid #808080; }
.back-page .line { height: 19px; padding-top: 1.500px; }
.back-page .file { height: 21px; }
.back-page { margin-right: 2px; }
.buttons { margin-top: 3px; border-top: 1px solid #ccc; padding: 10px 3px 0 0; display: flex; gap: 7px; justify-content: center; }
button { width: 63px; height: 26px; border: 0; border-radius: 2px; padding: 0 0 2px; background: linear-gradient(#0072c6, #00559c); color: #fff; font: bold 13px "Liberation Sans", Arial, sans-serif; white-space: nowrap; letter-spacing: -.1px; }

/* Footer */
.foot-head { height: 28px; flex: none; display: grid; grid-template-columns: 437px 196px 145px 217px; gap: 1px; color: #fff; font-weight: bold; line-height: 27px; }
.foot-head span { background: #005da5; padding-left: 10px; }
.foot { height: 173px; flex: none; background: #e5e5e5; display: grid; grid-template-columns: 205px 205px 207px 174px 1fr; padding: 5px 0 0 10px; }
.ext li { height: 28px; line-height: 27px; }
.legal { padding-top: 5px; }
.legal li { height: 25px; line-height: 25px; }
.social { display: flex; gap: 8px; padding-top: 30px; }
.you { font: bold 10px "Liberation Sans", sans-serif; fill: #444; }
.tube { font: bold 9px "Liberation Sans", sans-serif; fill: #fff; }
.flickr { font: bold 8px "Liberation Sans", sans-serif; fill: #2b4ba8; }
.copyright { height: 100px; flex: none; background: #005da5; color: #fff; font-weight: bold; text-align: center; line-height: 25px; padding-right: 8px; }
.copyright p { height: 25px; line-height: 23px; }
.copyright .site { padding-left: 14px; }

/* Taskbar */
.taskbar { height: 40px; margin-top: auto; background: #1c1c1e; display: flex; color: #eee; font-family: "Open Sans", "Noto Sans", sans-serif; }
.start { width: 48px; display: grid; place-items: center; }
.find { width: 344px; border: 1px solid #5a5a5a; background: #333; display: flex; align-items: center; padding-left: 11px; gap: 11px; font-size: 14.500px; color: #ddd; letter-spacing: -.3px; }
.apps { display: grid; grid-template-columns: 48px 48px 54px 46px 50px 48px; }
.apps div { display: grid; place-items: center; }
.apps .open { box-shadow: inset 0 -2px #8fc4f5; margin: 0 5px 0 5px; }
.apps .running { background: #47494b; box-shadow: inset 0 -2px #8fc4f5; border-right: 2px solid #3a3c3e; }
.tray { margin-left: auto; display: flex; align-items: center; font-size: 12px; padding-right: 4px; border-right: 0; }
.net { display: grid; grid-template-columns: 41px 57px; width: 98px; line-height: 13px; font-size: 11px; margin-right: 8px; }
.net em { font-style: normal; white-space: nowrap; letter-spacing: -.3px; }
.screen { margin: 0 7px 0 10px; }
.lang { width: 23px; margin: 0 11px 0 10px; letter-spacing: -.6px; }
.clock { width: 60px; text-align: center; line-height: 18px; font-size: 12px; letter-spacing: -.4px; white-space: nowrap; }
.notes { margin: 3px 10px 0 17px; }
.count { font: 11px "Open Sans", sans-serif; fill: #fff; }
.tray::after { content: ""; width: 1px; height: 40px; background: #666; }
```
